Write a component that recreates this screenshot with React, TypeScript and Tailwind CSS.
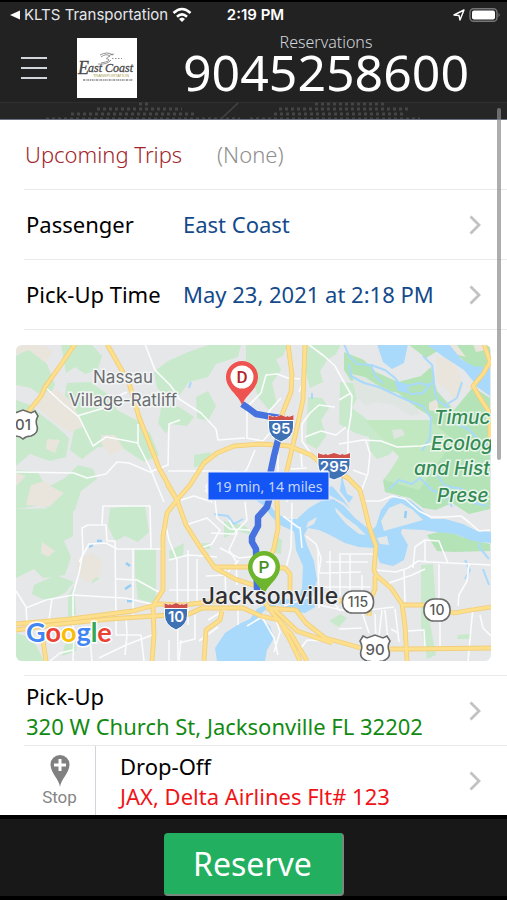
import type { ReactNode } from "react";

const UI_FONT = "font-['Noto_Sans',sans-serif]";
const SYSTEM_FONT = "font-['Inter',sans-serif]";

const WATER = [
  "M295 530 L299 518 L310 508 L322 501 L334 499 L345 506 L356 518 L372 531 L377 526 L382 510 L391 499 L400 496 L412 501 L425 512 L432 519 L446 519 L464 524 L478 531 L492 532 L492 543 L474 541 L456 534 L438 532 L424 530 L403 529 L402 533 L409 545 L405 560 L394 566 L381 563 L375 548 L360 547 L346 543 L331 535 L320 530 L309 528 L305 535 L308 545 L315 561 L318 580 L313 597 L316 607 L306 613 L294 611 L280 604 L266 610 L259 617 L271 626 L275 638 L268 650 L266 661 L218 661 L216 648 L226 633 L240 624 L251 619 L258 609 L270 603 L283 599 L299 600 L303 588 L304 566 L297 550 Z",
  "M296 532 L281 525 L272 516 L264 505 L254 498 L258 496 L268 502 L278 514 L289 519 L299 519 Z",
  "M378 344 L384 362 L393 369 L405 363 L409 344 L427 344 L445 357 L465 370 L474 381 L478 387 L491 396 L491 368 L474 366 L462 359 L450 344 Z",
  "M333 486 L345 500 L351 509 L345 503 L330 495 L322 492 Z M344 463 L344 480 L348 494 L354 497 L350 503 L341 491 Z",
  "M396 381 L408 384 L410 393 L399 391 Z",
];

const WATER_LINES = [
  "M345 344 L350 356 L358 364 L372 365 L386 370 L396 378 L402 386 L412 394 L424 393 L435 380 L433 365 L424 356",
  "M350 364 L352 376 L365 383 L380 387 L397 395 L410 401 L424 406 L432 418 L431 438 L423 451",
  "M434 381 L438 400 L450 408 L454 422 L469 429 L480 440 L490 445",
  "M372 365 L376 376 L384 383 M408 386 L421 383 L431 386 M445 406 L458 398 L463 382",
  "M436 472 L446 486 L463 489 L472 502 L488 506 M390 489 L400 480 L413 484 L421 478 L434 491 L446 493 L453 507",
  "M485 530 L480 547 L490 559 M466 560 L471 570 L466 579 M484 569 L490 585",
  "M215 514 L229 516 L235 524 L244 519 M192 382 L190 388 M313 393 L313 399",
];

const GREENS = [
  "M17 356 L29 349 L48 364 L56 385 L48 401 L32 388 L17 385 Z",
  "M17 400 L31 405 L45 417 L57 426 L70 438 L67 457 L51 461 L31 454 L17 466 Z",
  "M62 344 L92 344 L103 356 L99 369 L86 374 L76 367 L67 373 Z",
  "M68 383 L91 382 L107 393 L118 410 L139 421 L151 433 L160 455 L145 462 L122 447 L99 447 L83 459 L71 450 L75 430 L63 411 Z",
  "M17 470 L39 472 L47 488 L66 478 L79 465 L94 469 L98 479 L82 491 L76 510 L61 518 L44 505 L17 509 Z",
  "M17 509 L74 508 L74 536 L65 541 L72 557 L66 575 L44 578 L35 569 L17 578 Z",
  "M35 585 L57 575 L75 582 L66 593 L48 601 L33 594 Z",
  "M111 508 L146 505 L150 532 L139 542 L126 536 L116 541 L109 526 Z",
  "M136 549 L157 549 L157 604 L139 599 L136 573 Z",
  "M155 372 L169 361 L189 352 L213 344 L242 344 L239 357 L217 364 L209 377 L190 382 L180 396 L168 398 L158 388 Z",
  "M163 404 L180 407 L195 417 L188 426 L171 424 L167 434 L159 423 Z",
  "M197 397 L209 391 L217 406 L209 421 L198 418 Z M195 455 L212 452 L208 465 L195 467 Z",
  "M247 344 L289 344 L284 356 L277 359 L282 370 L273 383 L278 404 L270 410 L259 397 L254 379 L247 360 Z",
  "M307 344 L342 344 L337 354 L329 359 L321 371 L324 382 L311 388 L306 370 Z",
  "M309 397 L323 398 L330 408 L322 420 L327 436 L318 449 L307 443 Z",
  "M341 382 L354 383 L359 397 L353 408 L365 417 L379 431 L396 432 L400 445 L390 455 L378 459 L371 451 L370 437 L356 433 L340 424 Z",
  "M17 633 L33 638 L45 661 L17 661 Z M66 644 L78 641 L77 651 L63 656 Z",
  "M170 551 L185 543 L184 557 L171 560 Z M225 521 L247 526 L253 535 L239 531 L225 538 Z",
  "M203 543 L211 543 L211 549 L203 549 Z M276 535 L283 540 L282 554 L275 553 Z",
  "M422 565 L434 564 L437 605 L431 623 L437 655 L428 659 L422 626 Z",
  "M459 635 L471 634 L471 639 L458 639 Z M330 621 L341 614 L348 618 L340 627 Z",
  "M85 565 L94 567 L100 579 L92 584 L96 575 Z M69 596 L75 586 L77 614 L69 620 Z",
];

const MARSH = [
  "M345 352 L365 360 L377 372 L399 382 L422 376 L432 367 L438 391 L455 410 L474 387 L491 398 L491 509 L470 514 L453 503 L437 510 L424 508 L411 498 L386 492 L384 480 L404 461 L415 442 L430 441 L433 417 L416 407 L399 393 L377 388 L363 380 L352 381 L345 370 Z",
  "M409 344 L491 344 L491 370 L472 366 L455 353 L437 352 L427 358 Z",
  "M428 535 L447 530 L463 537 L491 544 L491 551 L454 552 L438 551 Z",
];

const BEIGE = [
  "M17 346 L43 344 L55 352 L46 362 L30 350 L17 354 Z",
  "M39 393 L58 390 L70 399 L78 413 L84 427 L70 432 L57 423 L46 414 L38 407 Z",
  "M48 439 L61 440 L56 453 L47 449 Z M102 435 L116 435 L125 449 L112 455 L103 445 Z",
  "M32 485 L45 481 L55 488 L65 493 L50 507 L27 505 Z M17 473 L27 476 L17 486 Z",
  "M43 542 L56 551 L49 557 L42 553 Z M78 560 L93 553 L103 562 L100 576 L89 583 L79 576 Z",
  "M384 344 L404 344 L402 359 L391 365 L385 358 Z M447 344 L457 344 L467 357 L456 354 Z",
  "M437 357 L449 358 L458 368 L465 386 L456 402 L448 389 L439 383 Z M430 403 L438 399 L440 412 L430 410 Z",
  "M474 344 L486 344 L487 350 L477 352 Z",
];

const ISLANDS = [
  "M382 521 L390 508 L402 503 L414 510 L424 520 L410 524 L385 531 Z",
  "M336 507 L346 517 L358 526 L367 535 L360 534 L347 524 L337 512 Z",
  "M309 522 L318 517 L315 524 L307 528 Z M378 538 L388 536 L390 545 L381 544 Z",
];

const STREETS = [
  "M46 387 L62 402 L80 417 L94 446 L107 437 L124 440 L139 443",
  "M78 416 L105 408 L117 397 L128 392",
  "M139 424 L139 444 L151 468 L165 502 M17 472 L75 473 L88 478 L107 474 L118 462 L130 463 L151 472 L169 465 L170 424 L181 420",
  "M146 344 L156 370 L171 385 L180 397 M177 397 L202 413 L217 429 L219 440 L246 438",
  "M169 471 L205 471 L220 471 L278 474 M247 438 L264 441 L274 429",
  "M248 438 L248 407 L262 393 L267 375 L278 374 L289 378 L301 379 M251 412 L265 419 L272 409 L282 398",
  "M309 344 L325 356 L336 366 L346 384 L353 396 L352 415 L349 433 L349 458",
  "M307 375 L300 392 M336 407 L320 405 L311 413 L303 424 L303 441 L313 455 M306 437 L322 431 L337 435 L347 427",
  "M340 400 L352 393 M340 444 L364 440 L382 441 L398 447 L422 446 L436 443 M367 441 L371 454 L369 473 L362 492 M354 470 L367 475",
  "M362 501 L381 501 L393 496 L406 499 L420 511 L432 517 L446 517 L462 516 L471 523 L480 531 L491 530",
  "M340 554 L375 554 M376 570 L397 572 L409 568 L419 561 L431 562 L492 565 M390 583 L413 575 L426 569 M414 568 L416 547 L426 540 L440 541 L444 551 L449 563",
  "M426 541 L426 562 M405 569 L406 602 M440 564 L440 602 M470 564 L468 581 L460 595 L459 606 M474 607 L469 661",
  "M17 591 L27 607 L28 623 M27 608 L47 600 L74 595 L106 597 L126 598 L157 605",
  "M74 632 L74 594 L80 573 L84 552 L83 528 L89 525 L107 525 L108 541 L116 541 L117 618 M80 562 L90 544 L107 543 L118 549 L163 549",
  "M103 525 L104 506 L151 506 L152 549 M134 549 L134 620 M117 579 L138 580 L156 590 L164 594",
  "M50 620 L53 598 M74 661 L75 633 L100 632 M93 661 L91 639 M51 661 L61 653 L74 650",
  "M100 658 L127 645 L153 635 M127 616 L128 635 L126 655 M117 618 L117 635 L142 635 L145 661 M170 640 L170 661",
  "M166 522 L170 540 L178 560 L179 660 M170 560 L189 555 L218 557 M170 590 L216 590 M189 550 L189 625 M198 559 L198 603",
  "M206 490 L216 500 L218 518 L231 529 L251 530 M182 500 L195 496 L210 501 L223 493 L239 499 M187 525 L208 518 L221 530 L213 544 L199 549",
  "M230 520 L238 533 L230 550 L237 561 L238 585 M219 475 L207 486 L213 503 M256 450 L248 469 L240 479 L226 485",
  "M246 502 L248 520 L235 534 L212 533 M240 560 L226 575 L207 576 M221 548 L240 558 L259 556 M226 566 L227 607 M239 595 L239 625",
  "M293 503 L292 548 L287 568 M284 516 L300 528 M307 536 L317 544 L322 558 L320 572 M301 527 L303 548",
  "M319 550 L320 608 M331 551 L331 595 M341 555 L341 596 M351 555 L351 591 M320 573 L362 572 M327 562 L369 562 M320 587 L371 587",
  "M363 575 L363 612 L370 633 M320 605 L352 612 L395 607 M376 614 L377 643 M386 610 L390 650 M340 629 L363 628 M392 629 L399 633",
  "M383 610 L380 636 L371 653 M396 609 L400 642 M409 631 L425 630 L426 647 M481 615 L484 628 L492 636 M441 614 L441 646",
  "M248 626 L263 617 L275 638 L279 655 M273 607 L281 632 L275 652 M297 655 L308 640 L325 641 M200 641 L219 627 M182 640 L180 661",
  "M209 620 L231 607 M196 615 L196 639 L180 643 M285 606 L310 597 L333 600 L341 611",
  "M279 454 L279 474 M290 474 L288 502 M302 472 L294 489 M302 451 L303 467 M308 468 L292 469",
];

const HIGHWAYS = [
  "M76 344 L61 366 L46 387 L42 396 L29 412",
  "M108 344 L130 383 L140 417 L160 468 L178 500 L187 525 L201 547 L216 568 L236 579 L260 587",
  "M168 484 L178 500 L191 485 L205 463 L218 453 L235 446 L262 444 L290 446 L312 455 L326 467 L349 478 L361 490 L365 505 L370 526 L377 546 L375 570 L377 575 L392 588 L403 604 L406 626 L408 661",
  "M178 500 L168 513 L164 536 L164 590 L154 606 L155 635 L153 661",
  "M289 344 L293 375 L292 392 L284 412 L279 437 L270 478 L269 502",
  "M306 344 L304 400 L297 432 L287 474 L278 501 L279 528 L275 548 L268 565",
  "M17 630 L60 624 L110 619 L155 616 L190 614 L203 608 L244 608 L262 616 L280 620 L291 640 L301 661",
  "M17 624 L72 619 L134 611 L160 604 L185 605 L225 600",
  "M216 567 L260 567 L286 568 L291 574 L291 591",
  "M264 600 L276 616 L292 634 L308 661 M267 608 L297 610 L307 623 L326 638 L348 644 L365 649 L410 649 L492 648",
  "M274 608 L298 631 L333 643 M205 661 L207 630 L221 620 L223 611",
  "M340 601 L372 598 L376 589 L376 576 M371 600 L370 616 M404 605 L425 605 L455 613 L472 610 L492 607",
  "M485 344 L491 362 L484 374 L474 386 L483 401 L491 413 L491 438 M44 640 L47 661",
];

const tripRows = [
  { label: "Passenger", value: "East Coast" },
  { label: "Pick-Up Time", value: "May 23, 2021 at 2:18 PM" },
];

// runs of dots: [first x, last x, y]
const dotRuns = [
  [139, 150, 1],
  [97, 182, 6],
  [71, 197, 11],
  [46, 240, 16],
  [315, 384, 1],
  [279, 411, 6],
  [274, 405, 11],
  [250, 420, 16],
];

const Chevron = () => (
  <svg
    className="h-5 w-3 flex-none"
    viewBox="0 0 12 20"
    fill="none"
    stroke="#c2c2c4"
    strokeWidth="2.8"
    aria-hidden="true"
  >
    <path d="M1.5 1.5 L10 10 L1.5 18.5" />
  </svg>
);

const Interstate = ({ x, y, w, label }: { x: number; y: number; w: number; label: string }) => (
  <g transform={`translate(${x} ${y})`}>
    <path
      d={`M${-w / 2} -13 Q${-w / 4} -9 0 -13 Q${w / 4} -9 ${w / 2} -13 L${w / 2} -1 Q${w / 2} 9 0 14 Q${-w / 2} 9 ${-w / 2} -1 Z`}
      fill="#3f72b5"
      stroke="#fff"
      strokeWidth="1"
    />
    <path
      d={`M${-w / 2} -13 Q${-w / 3} -10 ${-w / 4} -12 L${-w / 5} -11 L0 -13 L${w / 5} -11 L${w / 4} -12 Q${w / 3} -10 ${w / 2} -13 L${w / 2} -8 L${-w / 2} -8 Z`}
      fill="#d0504a"
    />
    <path d={`M${-w / 2} -7.5 H${w / 2}`} stroke="#fff" strokeWidth="1.2" />
    <text y="6" textAnchor="middle" fontSize="15" fontWeight="600" fill="#fff">
      {label}
    </text>
  </g>
);

const UsShield = ({ x, y, label }: { x: number; y: number; label: string }) => (
  <g transform={`translate(${x} ${y})`}>
    <path
      d="M-12 -13 L-8 -11 L0 -14 L8 -11 L12 -13 L15 -8 Q12 -3 14 2 Q16 9 8 12 Q3 12 0 15 Q-3 12 -8 12 Q-16 9 -14 2 Q-12 -3 -15 -8 Z"
      fill="#fff"
      stroke="#6b6b6b"
      strokeWidth="1.6"
    />
    <text y="6" textAnchor="middle" fontSize="15" fontWeight="500" fill="#5a5a5a">
      {label}
    </text>
  </g>
);

const StateRoute = ({ x, y, w, label }: { x: number; y: number; w: number; label: string }) => (
  <g transform={`translate(${x} ${y})`}>
    <rect x={-w / 2} y="-11" width={w} height="22" rx="10" fill="#fff" stroke="#6b6b6b" strokeWidth="1.6" />
    <text y="5" textAnchor="middle" fontSize="14" fontWeight="500" fill="#5a5a5a">
      {label}
    </text>
  </g>
);

const Pin = ({ x, y, color, ink, label }: { x: number; y: number; color: string; ink: string; label: string }) => (
  <g transform={`translate(${x} ${y})`}>
    <path d="M0 28 C-3 18 -16 12 -16 0 A16 16 0 0 1 16 0 C16 12 3 18 0 28 Z" fill={color} />
    <circle r="11.5" fill="#fff" />
    <text y="6" textAnchor="middle" fontSize="17" fontWeight="500" fill={ink} className="font-['Roboto',sans-serif]">
      {label}
    </text>
  </g>
);

const Paths = ({ items, ...rest }: { items: string[]; fill?: string; stroke?: string; strokeWidth?: number }) => (
  <g {...rest} strokeLinejoin="round">
    {items.map((d) => (
      <path key={d} d={d} />
    ))}
  </g>
);

const TripMap = () => (
  <svg
    viewBox="17 345 475 316"
    className={`block h-auto w-full rounded-md ${SYSTEM_FONT}`}
    role="img"
    aria-label="Route map"
  >
    <rect x="17" y="345" width="475" height="316" fill="#e6e7e9" />
    <Paths items={GREENS} fill="#c8e9cc" />
    <Paths items={MARSH} fill="#b4e3b8" />
    <path d="M366 420 L430 420 L455 440 L420 490 L385 480 L400 457 Z" fill="#c2e8c2" />
    <Paths items={BEIGE} fill="#e9e4dc" />
    <path
      d="M353 374 L366 377 L377 384 L391 391 L401 398 L416 406 L421 414 L412 416 L395 405 L376 402 L367 406 L357 397 Z M393 430 L403 429 L406 435 L395 439 Z"
      fill="#dfe5e1"
    />
    <Paths items={WATER} fill="#a9d9fb" />
    <Paths items={WATER_LINES} fill="none" stroke="#a9d9fb" strokeWidth={2} />
    <Paths items={ISLANDS} fill="#e4e8e8" />
    <path d="M90 547 L94 545 M127 563 L131 566 M126 589 L132 585 M128 601 L134 601 M407 511 L406 518 M98 541 h5" stroke="#94cdf8" strokeWidth="2.5" />
    <Paths items={STREETS} fill="none" stroke="#fbfcfd" strokeWidth={1.6} />
    <Paths items={HIGHWAYS} fill="none" stroke="#f1cf7c" strokeWidth={4.8} />
    <Paths items={HIGHWAYS} fill="none" stroke="#fddf8c" strokeWidth={3} />

    <g fill="none" stroke="#4672e0" strokeWidth="6.5" strokeLinejoin="round">
      <path d="M243 404 L249 408 L257 414 L268 416 L281 418 L281 432 L275 456 L271 475 L270 500 L268 507 L259 517 L259 526 L253 537 L253 542 L257 549 L258 590" />
    </g>

    <g fill="#6a6d72" fontSize="17" textAnchor="middle" stroke="#f3f5f4" strokeWidth="3" paintOrder="stroke">
      <text x="124" y="383">Nassau</text>
      <text x="124" y="406">Village-Ratliff</text>
    </g>
    <g fill="#348a55" fontSize="19" fontStyle="italic" fontWeight="500" stroke="#e8f6ea" strokeWidth="3" paintOrder="stroke">
      <text x="435" y="424">Timuc</text>
      <text x="432" y="450">Ecolog</text>
      <text x="415" y="475">and Hist</text>
      <text x="438" y="502">Prese</text>
    </g>

    <UsShield x={24} y={424} label="01" />
    <UsShield x={376} y={649} label="90" />
    <Interstate x={282} y={428} w={25} label="95" />
    <Interstate x={335} y={466} w={32} label="295" />
    <Interstate x={177} y={616} w={23} label="10" />
    <StateRoute x={359} y={602} w={31} label="115" />
    <StateRoute x={438} y={610} w={26} label="10" />

    <Pin x={243} y={377} color="#ee534f" ink="#b3262a" label="D" />
    <Pin x={265} y={567} color="#6cb52d" ink="#4c8f1f" label="P" />
    <text
      x="271"
      y="604"
      textAnchor="middle"
      fontSize="23"
      fontWeight="500"
      fill="#2f3033"
      stroke="#f3f3f3"
      strokeWidth="2"
      paintOrder="stroke"
    >
      Jacksonville
    </text>

    <rect x="209" y="472" width="121" height="28" fill="#1456f5" stroke="#dfe8fb" strokeWidth="1" />
    <text x="270" y="492" textAnchor="middle" fontSize="14" fill="#c3d5ff" className={UI_FONT}>
      19 min, 14 miles
    </text>

    <text
      x="27"
      y="642"
      fontSize="27"
      fontWeight="700"
      stroke="#fff"
      strokeWidth="3"
      paintOrder="stroke"
      className="font-['Lato',sans-serif]"
    >
      <tspan fill="#4285f4">G</tspan>
      <tspan fill="#ea4335">o</tspan>
      <tspan fill="#fbbc05">o</tspan>
      <tspan fill="#4285f4">g</tspan>
      <tspan fill="#34a853">l</tspan>
      <tspan fill="#ea4335">e</tspan>
    </text>
  </svg>
);

const CompanyLogo = () => (
  <svg viewBox="0 0 60 60" className="size-15 flex-none bg-white" role="img" aria-label="East Coast Transportation">
    <g fill="none" stroke="#777" strokeWidth="0.8">
      <path d="M24 19 Q29 15 33 18 Q27 21 31 21 Q35 23 24 25 M33 17 L37 16 M23 17 Q30 13 36 17 M21 26 Q30 27 34 22" />
      <path d="M35 20.5 H45" strokeDasharray="1.5 1.5" />
    </g>
    <g className="font-['Liberation_Serif',serif]" fontStyle="italic" fill="#4b4b4b" stroke="#4b4b4b" strokeWidth="0.3">
      <text x="1" y="36" fontSize="18">E</text>
      <text x="11" y="34" fontSize="12">ast Coast</text>
    </g>
    <text x="34" y="39" textAnchor="middle" fontSize="4" fill="#a39a4c" className="font-['Liberation_Sans',sans-serif]">
      TRANSPORTATION
    </text>
    <path d="M6 42 H56" stroke="#888" strokeWidth="1.4" strokeDasharray="2 .7 1 .6" />
  </svg>
);

const StatusBar = () => (
  <div className={`grid h-7 grid-cols-[1fr_auto_1fr] items-center border-t-2 border-black pl-2.5 pr-1.5 text-[15px] text-white ${SYSTEM_FONT}`}>
    <div className="flex items-center gap-1">
      <svg className="h-2.5 w-2.5 flex-none" viewBox="0 0 10 10" fill="currentColor" aria-hidden="true">
        <path d="M0 5 L10 0.5 V9.5 Z" />
      </svg>
      <span className="whitespace-nowrap text-gray-200">KLTS Transportation</span>
      <svg className="h-4 w-5 flex-none" viewBox="0 0 20 16" fill="none" stroke="currentColor" strokeWidth="2.6" aria-hidden="true">
        <path d="M1.5 6 Q10 -2 18.5 6 M5 9.8 Q10 5 15 9.8" />
        <path d="M7 12 Q10 9 13 12 L10 15 Z" fill="currentColor" stroke="none" />
      </svg>
    </div>
    <span className="font-semibold">2:19 PM</span>
    <div className="flex items-center justify-end gap-1">
      <svg className="size-3" viewBox="0 0 12 12" fill="none" stroke="currentColor" strokeWidth="1.4" strokeLinejoin="round" aria-hidden="true">
        <path d="M1 6 L11 1 L7 11 L6 6.5 Z" />
      </svg>
      <svg className="h-3.5 w-8" viewBox="0 0 32 14" aria-hidden="true">
        <rect x="1" y="0.7" width="27" height="12.6" rx="3.6" fill="none" stroke="#77777a" strokeWidth="1.4" />
        <rect x="3" y="2.6" width="23" height="8.8" rx="2" fill="#fff" />
        <path d="M29.5 5 Q32 7 29.5 9 Z" fill="#77777a" />
      </svg>
    </div>
  </div>
);

const Header = () => (
  <header className="relative flex-none border-b border-gray-500 bg-[#222222] pb-[11px]">
    <svg className="absolute bottom-0 left-0 w-full" viewBox="0 0 507 17" aria-hidden="true">
      <rect width="507" height="17" fill="#262626" />
      <path d="M0 .5 H507" stroke="#303030" />
      {dotRuns.map(([from, to, y]) => (
        <path key={`${from}-${y}`} d={`M${from} ${y + 1} H${to}`} stroke="#454545" strokeWidth="3" strokeDasharray="3 3" />
      ))}
      <path d="M221 17 L238 1" stroke="#444" strokeWidth="1.5" />
    </svg>
    <div className="relative">
      <StatusBar />
      <div className="flex h-20 items-center pl-[21px]">
        <button type="button" aria-label="Menu" className="mr-[30px] flex w-[26px] flex-col gap-2">
          <span className="h-0.5 w-full bg-gray-300" />
          <span className="h-0.5 w-full bg-gray-300" />
          <span className="h-0.5 w-full bg-gray-300" />
        </button>
        <CompanyLogo />
        <div className="flex-1 self-start pl-2 pt-1 text-center">
          <p className="text-base leading-5 font-light text-gray-300">Reservations</p>
          <h1 className="text-[50px] leading-10 text-white">9045258600</h1>
        </div>
      </div>
    </div>
  </header>
);

const Row = ({ children }: { children: ReactNode }) => (
  <div className="ml-6 flex h-[70px] items-stretch border-b border-[#e9e9ea]">{children}</div>
);

export default function App() {
  return (
    <div className={`flex min-h-screen flex-col bg-white ${UI_FONT}`}>
      <Header />

      <main className="relative flex-1 text-[22px] text-black">
        <Row>
          <h2 className="flex w-[193px] items-center pl-px font-light text-[#a1262b]">Upcoming Trips</h2>
          <span className="flex items-center font-light text-[#8e8e8e]">(None)</span>
        </Row>
        {tripRows.map((row) => (
          <Row key={row.label}>
            <button type="button" className="flex flex-1 items-center pl-0.5 pr-[26px] text-left">
              <span className="w-[157px]">{row.label}</span>
              <span className="flex-1 text-[#134a8b]">{row.value}</span>
              <Chevron />
            </button>
          </Row>
        ))}

        <div className="px-4 pb-3.5 pt-[15px]">
          <TripMap />
        </div>

        <div className="ml-6 border-t border-[#e9e9ea]" />
        <Row>
          <button type="button" className="flex flex-1 items-center pl-0.5 pr-[26px] text-left">
            <span className="flex-1 leading-[30px]">
              <span className="block">Pick-Up</span>
              <span className="block text-[#128a12]">320 W Church St, Jacksonville FL 32202</span>
            </span>
            <Chevron />
          </button>
        </Row>
        <div className="ml-6 flex h-[69px] items-stretch">
          <button
            type="button"
            className="flex w-18 flex-none flex-col items-center justify-center border-r border-gray-300 font-['Roboto',sans-serif] text-[17px] leading-5 text-[#858585]"
          >
            <svg className="h-8 w-5" viewBox="0 0 20 32" aria-hidden="true">
              <path d="M10 32 C9 24 0.5 18 0.5 9.5 A9.5 9.5 0 0 1 19.5 9.5 C19.5 18 11 24 10 32 Z" fill="#808080" />
              <path d="M10 4 V16 M4 10 H16" stroke="#fff" strokeWidth="3" />
            </svg>
            Stop
          </button>
          <button type="button" className="flex flex-1 items-center pl-6 pr-[26px] text-left">
            <span className="flex-1 leading-[30px]">
              <span className="block">Drop-Off</span>
              <span className="block text-[#f01418]">JAX, Delta Airlines Flt# 123</span>
            </span>
            <Chevron />
          </button>
        </div>

        <div className="absolute -top-3 right-1.5 h-[352px] w-1 rounded-full bg-[#8a8a8c]/70" />
      </main>

      <footer className="flex flex-none justify-center border-y-4 border-black bg-[#181818] pt-3.5">
        <button
          type="button"
          className="h-[63px] w-[180px] rounded-sm border-b-2 border-r-2 border-[#77897e] bg-[#23af60] text-[32px] leading-none text-white"
        >
          Reserve
        </button>
      </footer>
    </div>
  );
}
